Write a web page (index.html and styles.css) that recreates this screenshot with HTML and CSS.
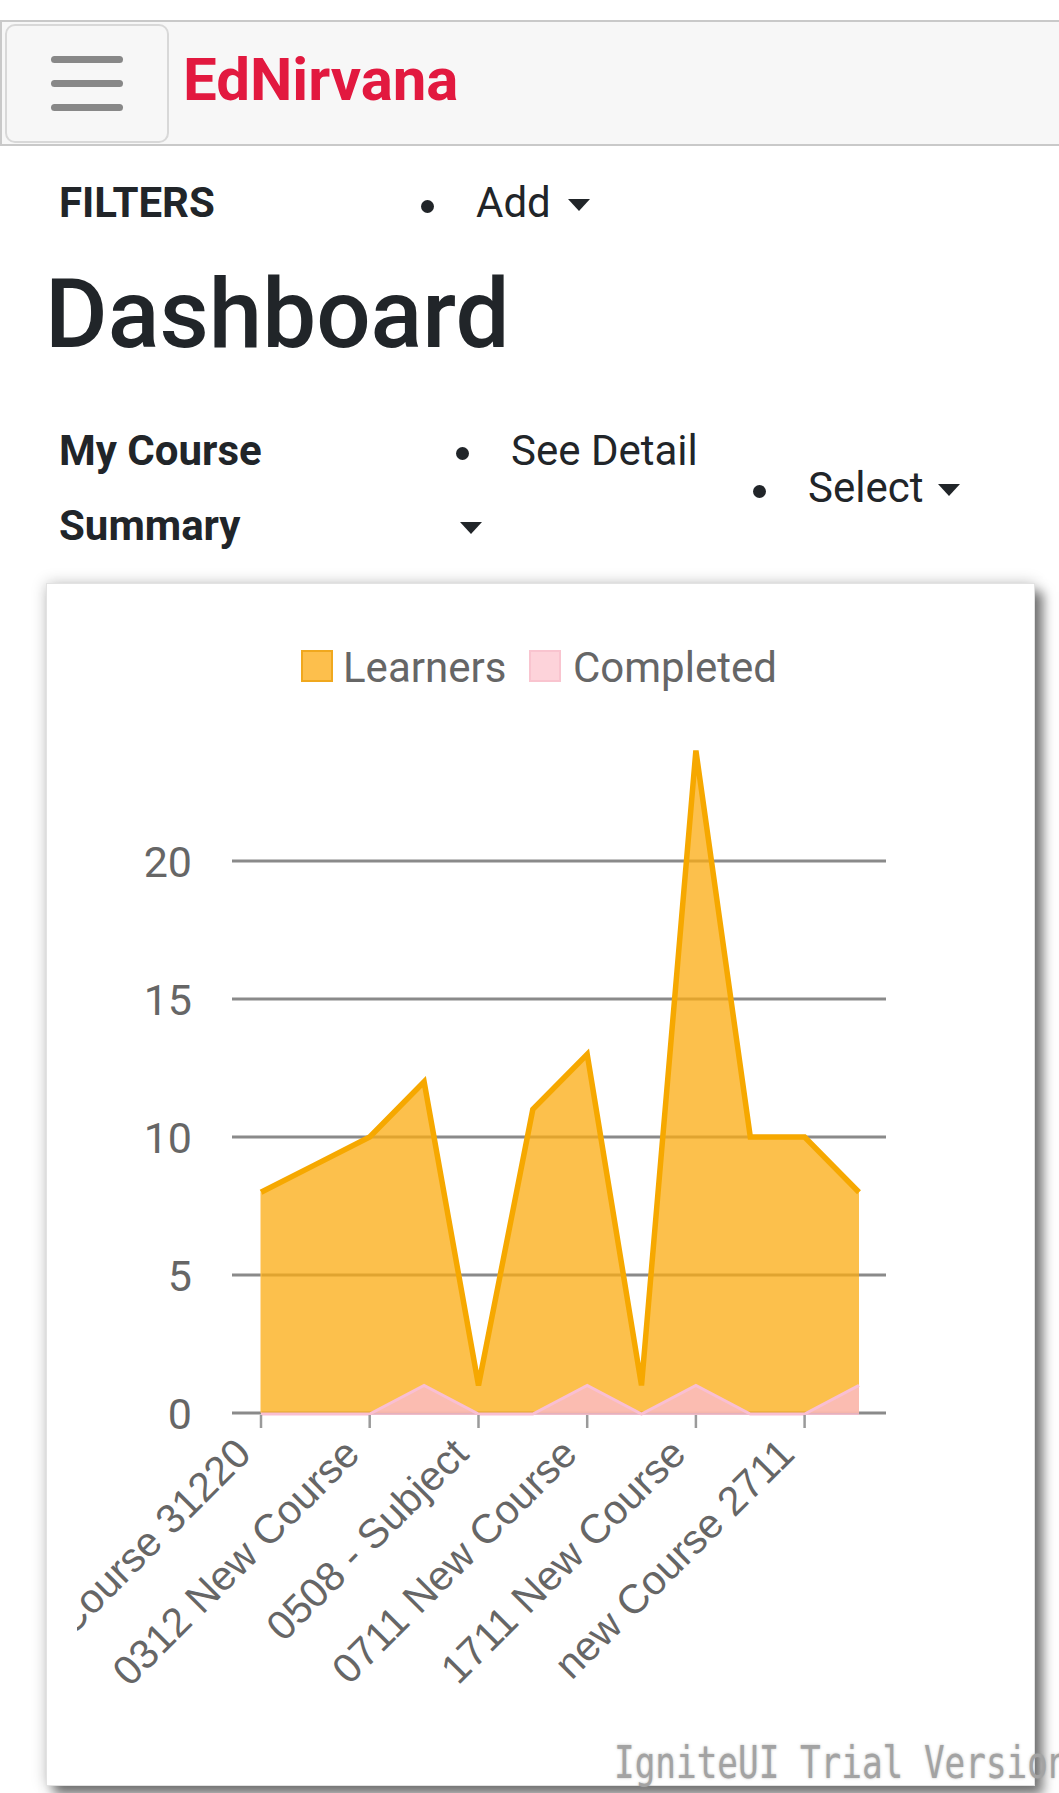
FILE: index.html
```html
<!DOCTYPE html>
<html lang="en">
<head>
<meta charset="utf-8">
<title>EdNirvana Dashboard</title>
<link rel="stylesheet" href="styles.css">
</head>
<body>
<div class="page">
  <header class="topbar">
    <button class="menu-btn" type="button" aria-label="Menu"><span></span><span></span><span></span></button>
    <span class="brand">EdNirvana</span>
  </header>

  <div class="filters-row">
    <span class="filters-label">FILTERS</span>
    <div class="navitem">Add<span class="caret caret-add"></span></div>
  </div>

  <h1 class="title">Dashboard</h1>

  <div class="summary-row">
    <div class="summary-title">My Course Summary</div>
    <div class="detail-col">
      <div class="navitem navitem-tall">See Detail</div>
      <div class="caret-line"><span class="caret caret-alone"></span></div>
    </div>
    <div class="navitem">Select<span class="caret caret-select"></span></div>
  </div>

  <div class="chart-card">
    <svg class="chart" width="987" height="1201" viewBox="0 0 987 1201" xmlns="http://www.w3.org/2000/svg">
      <defs>
        <clipPath id="labelclip"><rect x="30" y="0" width="957" height="1201"/></clipPath>
      </defs>
      <!-- legend -->
      <rect x="255" y="67" width="30" height="30" fill="#fdbf4c" stroke="#f0a81e" stroke-width="2"/>
      <text class="legend-text" x="296" y="98">Learners</text>
      <rect x="483" y="67" width="30" height="30" fill="#fdd3da" stroke="#f9c4cf" stroke-width="2"/>
      <text class="legend-text" x="526" y="98">Completed</text>

      <!-- gridlines -->
      <g stroke="#8a8a8a" stroke-width="3">
        <line x1="185" y1="277" x2="839" y2="277"/>
        <line x1="185" y1="415" x2="839" y2="415"/>
        <line x1="185" y1="553" x2="839" y2="553"/>
        <line x1="185" y1="691" x2="839" y2="691"/>
        <line x1="185" y1="829" x2="839" y2="829"/>
      </g>
      <!-- y labels -->
      <g class="axis-text" text-anchor="end">
        <text x="145" y="293">20</text>
        <text x="145" y="431">15</text>
        <text x="145" y="569">10</text>
        <text x="145" y="707">5</text>
        <text x="145" y="845">0</text>
      </g>

      <!-- Learners area -->
      <polygon fill="rgba(251,172,20,0.76)" stroke="none"
        points="214,829 214,608.2 268.4,580.6 322.7,553 377.1,497.8 431.5,801.4 485.8,525.4 540.2,470.2 594.5,801.4 648.9,166.6 703.3,553 757.6,553 812,608.2 812,829"/>
      <polyline fill="none" stroke="#f6a800" stroke-width="5.5" stroke-linejoin="miter" stroke-miterlimit="3"
        points="214,608.2 268.4,580.6 322.7,553 377.1,497.8 431.5,801.4 485.8,525.4 540.2,470.2 594.5,801.4 648.9,166.6 703.3,553 757.6,553 812,608.2"/>
      <line x1="214" y1="608.2" x2="214" y2="829" stroke="#fdbf4c" stroke-width="1"/>

      <!-- Completed area -->
      <polygon fill="rgba(250,186,202,0.8)" stroke="none"
        points="214,831 214,829 268.4,829 322.7,829 377.1,801.4 431.5,829 485.8,829 540.2,801.4 594.5,829 648.9,801.4 703.3,829 757.6,829 812,801.4 812,831"/>
      <polyline fill="none" stroke="#f9bfd3" stroke-width="3"
        points="214,830 268.4,830 322.7,830 377.1,801.4 431.5,830 485.8,830 540.2,801.4 594.5,830 648.9,801.4 703.3,830 757.6,830 812,801.4"/>

      <!-- ticks -->
      <g stroke="#9a9a9a" stroke-width="2.5">
        <line x1="214" y1="831" x2="214" y2="844"/>
        <line x1="322.7" y1="831" x2="322.7" y2="844"/>
        <line x1="431.5" y1="831" x2="431.5" y2="844"/>
        <line x1="540.2" y1="831" x2="540.2" y2="844"/>
        <line x1="648.9" y1="831" x2="648.9" y2="844"/>
        <line x1="757.6" y1="831" x2="757.6" y2="844"/>
      </g>

      <!-- x labels -->
      <g class="x-label" text-anchor="end" clip-path="url(#labelclip)">
        <text x="206" y="872" transform="rotate(-45 206 872)">New Course 31220</text>
        <text x="314.7" y="872" transform="rotate(-45 314.7 872)">0312 New Course</text>
        <text x="423.5" y="872" transform="rotate(-45 423.5 872)">0508 - Subject</text>
        <text x="532.2" y="872" transform="rotate(-45 532.2 872)">0711 New Course</text>
        <text x="640.9" y="872" transform="rotate(-45 640.9 872)">1711 New Course</text>
        <text x="749.6" y="872" transform="rotate(-45 749.6 872)">new Course 2711</text>
      </g>
    </svg>
    <div class="watermark">IgniteUI Trial Version</div>
  </div>
</div>
</body>
</html>
```
FILE: styles.css
```css
* {
  box-sizing: border-box;
}

html,
body {
  margin: 0;
  padding: 0;
  background: #ffffff;
}

body {
  font-family: Roboto, "Noto Sans", sans-serif;
  color: #212529;
}

.page {
  width: 1059px;
  height: 1793px;
  overflow: hidden;
  padding-top: 20px;
}

/* ---------- top bar ---------- */
.topbar {
  display: flex;
  align-items: center;
  height: 126px;
  border: 2px solid #c9c9c9;
  border-right: 0;
  background: #f7f7f7;
  padding-left: 3px;
}

.menu-btn {
  width: 164px;
  height: 119px;
  border: 2px solid #d8d8d8;
  border-radius: 10px;
  background: #f7f7f7;
  display: flex;
  flex-direction: column;
  justify-content: center;
  align-items: center;
  gap: 17px;
  padding: 0;
  flex-shrink: 0;
}

.menu-btn span {
  display: block;
  width: 72px;
  height: 7px;
  border-radius: 4px;
  background: #888888;
}

.brand {
  font-weight: 700;
  font-size: 60px;
  line-height: 1.172;
  color: #e2193f;
  margin-left: 14px;
  margin-bottom: 6px;
}

/* ---------- filter row ---------- */
.filters-row {
  display: flex;
  align-items: center;
  height: 60px;
  margin-top: 27px;
  padding-left: 59px;
}

.filters-label {
  width: 362px;
  flex-shrink: 0;
  font-weight: 700;
  font-size: 42px;
  line-height: 60px;
}

.navitem {
  display: flex;
  align-items: center;
  font-size: 42px;
  line-height: 60px;
  white-space: nowrap;
}

.navitem::before {
  content: "";
  width: 13px;
  height: 13px;
  border-radius: 50%;
  background: #212529;
  margin-right: 42px;
  margin-top: 6px;
  flex-shrink: 0;
}

.navitem-tall {
  line-height: 75px;
}

.caret {
  width: 0;
  height: 0;
  border-left: 11px solid transparent;
  border-right: 11px solid transparent;
  border-top: 12px solid #212529;
  margin-left: 14px;
  margin-top: 4px;
}

.caret-add {
  margin-left: 17px;
}

.caret-select {
  margin-left: 15px;
}

/* ---------- title ---------- */
.title {
  margin: 22px 0 0 0;
  padding-left: 45px;
  font-size: 96px;
  font-weight: 500;
  line-height: 118px;
  color: #212529;
}

/* ---------- summary row ---------- */
.summary-row {
  display: flex;
  align-items: center;
  margin-top: 40px;
  padding-left: 59px;
}

.summary-title {
  width: 250px;
  flex-shrink: 0;
  font-weight: 700;
  font-size: 42px;
  line-height: 75px;
}

.detail-col {
  width: 297px;
  margin-left: 147px;
  flex-shrink: 0;
  display: flex;
  flex-direction: column;
  align-self: flex-start;
}

.caret-line {
  height: 75px;
  display: flex;
  align-items: center;
}

.caret-alone {
  margin-left: 4px;
}

/* ---------- chart card ---------- */
.chart-card {
  position: relative;
  margin-top: 20px;
  margin-left: 46px;
  width: 989px;
  height: 1203px;
  border: 1px solid #e2e2e2;
  background: #ffffff;
  box-shadow: 0 0 14px rgba(0, 0, 0, 0.22), 8px 9px 11px rgba(0, 0, 0, 0.5);
}

.chart {
  display: block;
}

.legend-text {
  font-family: Roboto, "Noto Sans", sans-serif;
  font-size: 42px;
  fill: #666666;
}

.axis-text {
  font-family: Roboto, "Noto Sans", sans-serif;
  font-size: 43px;
  fill: #666666;
}

.x-label {
  font-family: "Liberation Sans", Arial, sans-serif;
  font-size: 41px;
  fill: #666666;
}

.watermark {
  position: absolute;
  left: 567px;
  top: 1154px;
  font-family: "DejaVu Sans Mono", monospace;
  font-size: 44px;
  line-height: 50px;
  color: #a3a3a3;
  white-space: nowrap;
  transform: scaleX(0.78);
  transform-origin: left top;
  text-shadow: 0 0 3px rgba(150, 150, 150, 0.6);
}
```
